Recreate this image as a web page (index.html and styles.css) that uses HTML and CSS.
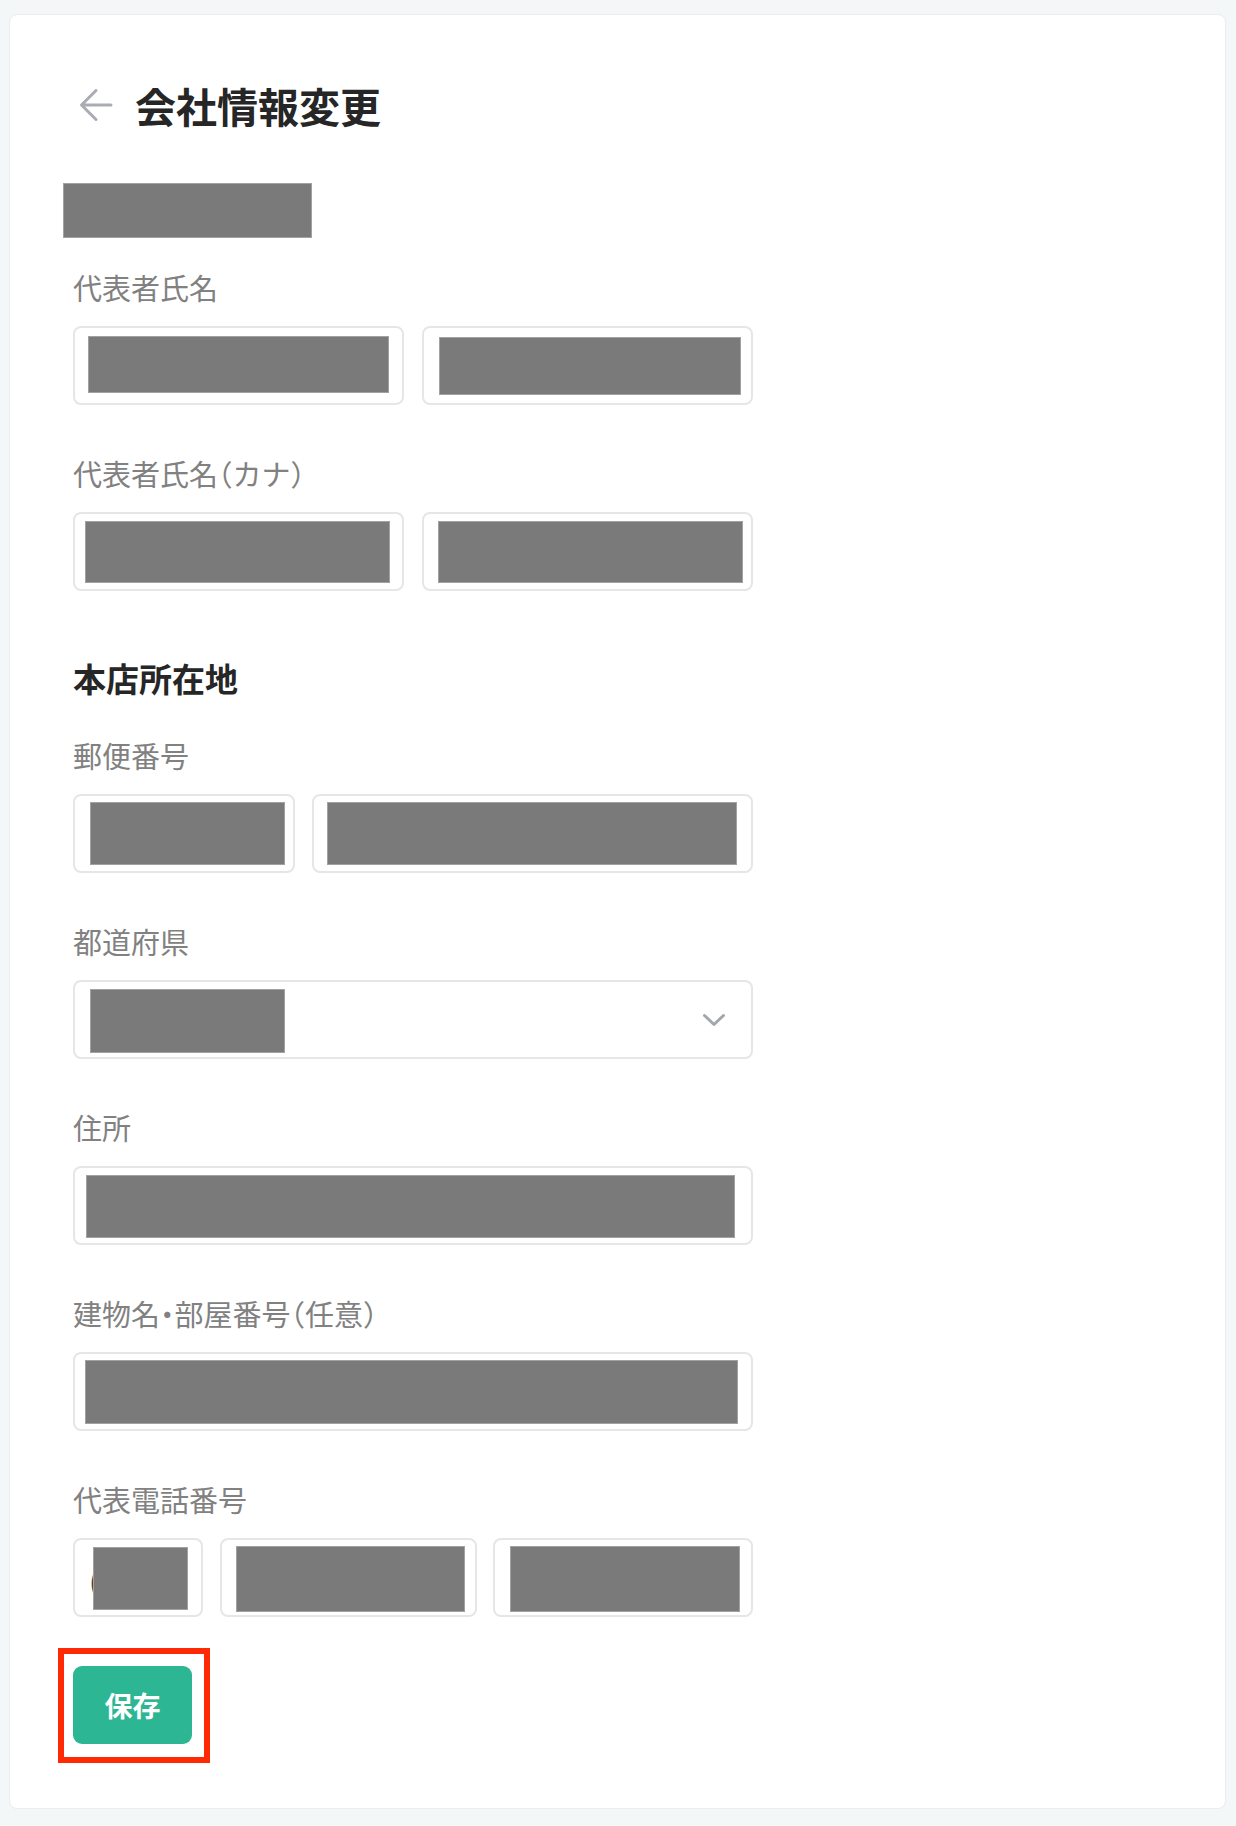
FILE: index.html
```html
<!DOCTYPE html>
<html lang="ja">
<head>
<meta charset="utf-8">
<title>会社情報変更</title>
<link rel="stylesheet" href="styles.css">
</head>
<body>
<div class="card">
  <header class="page-head">
    <a class="back" href="#" aria-label="戻る">
      <svg width="34" height="34" viewBox="0 0 34 34" aria-hidden="true">
        <path d="M32 17H3M17 2.5L2.5 17L17 31.5" fill="none" stroke="#a9acb3" stroke-width="3" stroke-linecap="round" stroke-linejoin="round"/>
      </svg>
    </a>
    <h1 class="title">会社情報変更</h1>
  </header>

  <div class="company-name"><span class="redact redact-company"></span></div>

  <form class="form">
    <div class="field">
      <div class="label">代表者氏名</div>
      <div class="row row-half">
        <div class="input inset-name1"><span class="redact"></span></div>
        <div class="input inset-name2"><span class="redact"></span></div>
      </div>
    </div>

    <div class="field">
      <div class="label">代表者氏名（カナ）</div>
      <div class="row row-half">
        <div class="input inset-kana1"><span class="redact"></span></div>
        <div class="input inset-kana2"><span class="redact"></span></div>
      </div>
    </div>

    <h2 class="section">本店所在地</h2>

    <div class="field">
      <div class="label">郵便番号</div>
      <div class="row row-postal">
        <div class="input inset-postal1"><span class="redact"></span></div>
        <div class="input inset-postal2"><span class="redact"></span></div>
      </div>
    </div>

    <div class="field">
      <div class="label">都道府県</div>
      <div class="input select">
        <span class="redact redact-select"></span>
        <svg class="chevron" width="24" height="14" viewBox="0 0 24 14" aria-hidden="true">
          <path d="M2.5 2.5L12 11.5L21.5 2.5" fill="none" stroke="#a3a6ab" stroke-width="3" stroke-linecap="round" stroke-linejoin="round"/>
        </svg>
      </div>
    </div>

    <div class="field">
      <div class="label">住所</div>
      <div class="input inset-address"><span class="redact"></span></div>
    </div>

    <div class="field">
      <div class="label">建物名・部屋番号（任意）</div>
      <div class="input inset-building"><span class="redact"></span></div>
    </div>

    <div class="field field-last">
      <div class="label">代表電話番号</div>
      <div class="row row-phone">
        <div class="input input-phone"><span class="paren">(</span><span class="redact redact-phone"></span></div>
        <div class="input inset-phone2"><span class="redact"></span></div>
        <div class="input inset-phone3"><span class="redact"></span></div>
      </div>
    </div>

    <div class="actions">
      <button type="button" class="btn-save">保存</button>
      <span class="highlight"></span>
    </div>
  </form>
</div>
</body>
</html>
```

FILE: styles.css
```css
* {
  box-sizing: border-box;
}

html, body {
  margin: 0;
  padding: 0;
  background: #f4f7f7;
}

body {
  font-family: "Noto Sans CJK JP", "Noto Sans", sans-serif;
  color: #262626;
  height: 1826px;
  overflow: hidden;
}

.card {
  margin: 14px 10px 0 9px;
  background: #ffffff;
  border: 1px solid #ebecec;
  border-radius: 8px;
  padding: 62px 63px 64px 63px;
}

.page-head {
  display: flex;
  align-items: center;
  height: 56px;
  padding-left: 6px;
}

.back {
  display: flex;
  width: 34px;
  height: 34px;
}

.title {
  margin: 0 0 0 22px;
  font-size: 41px;
  line-height: 56px;
  font-weight: 700;
  color: #262626;
}

.company-name {
  margin: 50px 0 0 -10px;
  height: 55px;
}

.redact {
  display: block;
  background: #7a7a7a;
  border: 1px solid #a2a2a2;
}

.redact-company {
  width: 249px;
  height: 55px;
}

.form {
  margin-top: 29px;
}

.field {
  margin-bottom: 48px;
}

.field-last {
  margin-bottom: 49px;
}

.label {
  font-size: 29px;
  line-height: 40px;
  color: #818181;
  margin-bottom: 19px;
  font-feature-settings: "halt";
}

.section {
  margin: 65px 0 35px;
  font-size: 33px;
  line-height: 44px;
  font-weight: 700;
  color: #262626;
}

.row {
  display: grid;
}

.row-half {
  grid-template-columns: 331px 331px;
  column-gap: 18px;
}

.row-postal {
  grid-template-columns: 222px 441px;
  column-gap: 17px;
}

.row-phone {
  grid-template-columns: 130px 257px 260px;
  column-gap: 16.5px;
}

.input {
  position: relative;
  height: 79px;
  width: 680px;
  border: 2px solid #e6e6e6;
  border-radius: 8px;
  background: #ffffff;
  padding: 8px 12px 6px 12px;
}

.row .input {
  width: auto;
}

.input .redact {
  height: 100%;
  width: 100%;
}

/* per-field placement of the redaction patches */
.inset-name1 { padding: 8px 13px 10px 13px; }
.inset-name2 { padding: 9px 10px 8px 15px; }
.inset-kana1 { padding: 7px 12px 6px 10px; }
.inset-kana2 { padding: 7px 8px 6px 14px; }
.inset-postal1 { padding: 6px 8px 6px 15px; }
.inset-postal2 { padding: 6px 14px 6px 13px; }
.inset-address { padding: 7px 16px 5px 11px; }
.inset-building { padding: 6px 13px 5px 10px; }
.inset-phone2 { padding: 6px 10px 3px 14px; }
.inset-phone3 { padding: 6px 11px 3px 15px; }

.select {
  display: flex;
  align-items: center;
  justify-content: space-between;
  padding: 7px 25px 4px 15px;
}

.input .redact-select {
  width: 195px;
}

.chevron {
  flex: none;
  margin-top: -2px;
}

.input-phone {
  display: flex;
  align-items: center;
  padding: 7px 13px 5px 14px;
}

.paren {
  flex: none;
  width: 4px;
  margin-top: 2px;
  font-size: 29px;
  line-height: 40px;
  color: #444444;
}

.input .redact-phone {
  position: relative;
  flex: 1;
  width: auto;
}

.actions {
  position: relative;
  width: 119px;
  height: 78px;
}

.btn-save {
  width: 119px;
  height: 78px;
  border: 0;
  border-radius: 9px;
  background: #2db693;
  color: #ffffff;
  font-family: "Noto Sans CJK JP", "Noto Sans", sans-serif;
  font-size: 28px;
  font-weight: 700;
  padding: 0;
  cursor: pointer;
}

.highlight {
  position: absolute;
  left: -15px;
  top: -18px;
  width: 152px;
  height: 115px;
  border: 6px solid #ff2a05;
  pointer-events: none;
}
```
